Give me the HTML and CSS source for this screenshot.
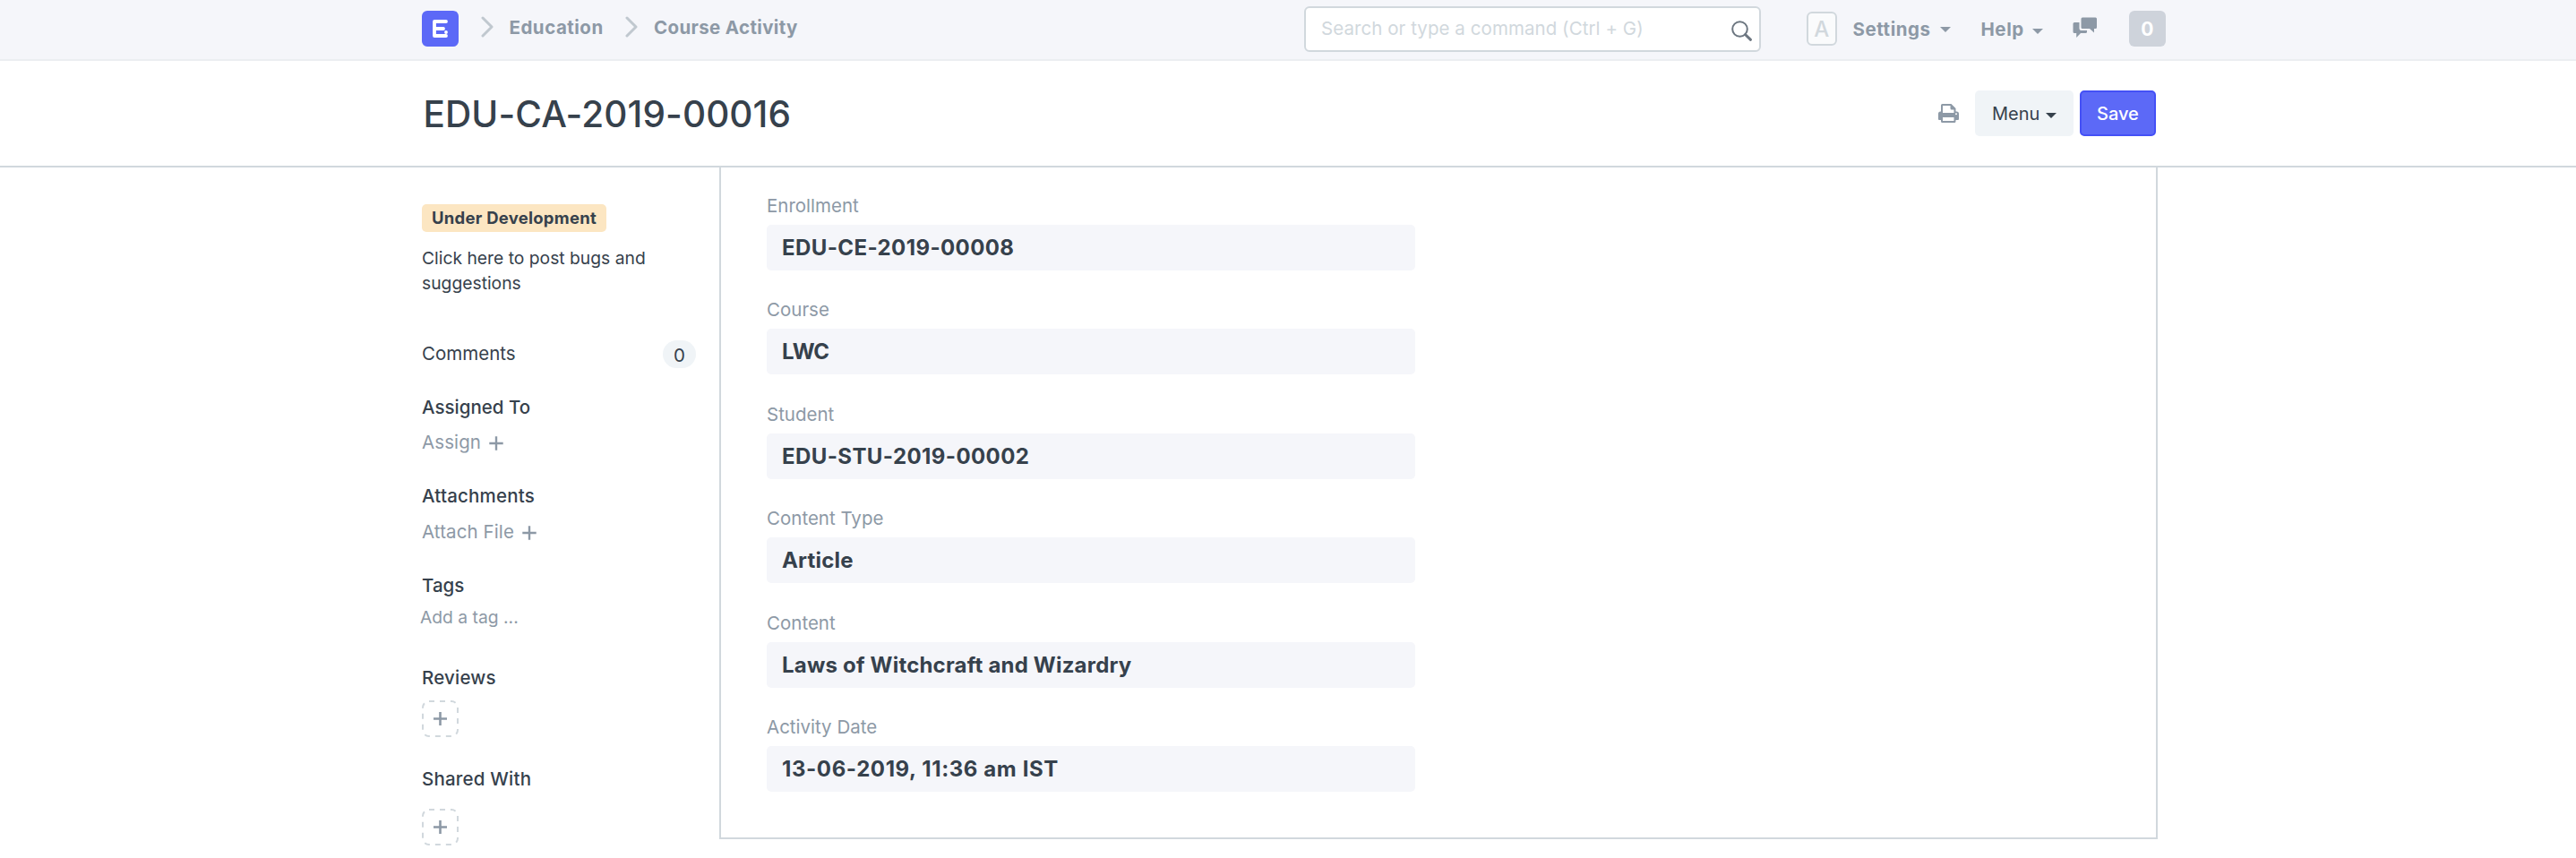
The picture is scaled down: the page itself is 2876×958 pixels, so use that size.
FILE: index.html
```html
<!DOCTYPE html>
<html lang="en">
<head>
<meta charset="utf-8">
<title>EDU-CA-2019-00016</title>
<link rel="stylesheet" href="styles.css">
</head>
<body>
<header class="navbar">
  <div class="nav-left">
    <a class="logo"><svg width="41" height="40" viewBox="0 0 41 40"><rect width="41" height="40" rx="6" fill="#5c69f7"/><path d="M27 24V24M27 12H14V28H27M14 20H24" fill="none" stroke="#fff" stroke-width="3.800" stroke-linecap="round" stroke-linejoin="round"/></svg></a>
    <svg class="chevron" width="14" height="24" viewBox="0 0 14 24"><path d="M2 2L12 12L2 22"/></svg>
    <a class="crumb crumb-module">Education</a>
    <svg class="chevron chevron-second" width="14" height="24" viewBox="0 0 14 24"><path d="M2 2L12 12L2 22"/></svg>
    <a class="crumb crumb-doctype">Course Activity</a>
  </div>
  <div class="search">
    <span class="search-text">Search or type a command (Ctrl + G)</span>
    <svg class="search-icon" width="24" height="24" viewBox="0 0 24 24"><circle cx="9.5" cy="9.5" r="8.3" fill="none" stroke="#6c7680" stroke-width="2"/><path d="M15.5 15.5L21.5 21.3" stroke="#6c7680" stroke-width="3" stroke-linecap="round"/></svg>
  </div>
  <div class="nav-right">
    <span class="avatar">A</span>
    <a class="nav-link settings">Settings</a><i class="caret caret-settings"></i>
    <a class="nav-link help">Help</a><i class="caret caret-help"></i>
    <svg class="chat" width="28" height="24" viewBox="0 0 28 24"><path d="M11 0.5H25.5Q27 .5 27 2V11.500Q27 13 25.500 13H24V17.500L19 13H11Q9.500 13 9.500 11.500V2Q9.500 .5 11 .5Z"/><path d="M2 6H7.500V13Q7.500 15 9.500 15H16V16.500Q16 18 14.500 18H9L4.200 23V18H2Q.5 18 .5 16.500V7.500Q.5 6 2 6Z"/></svg>
    <span class="count">0</span>
  </div>
</header>
<section class="page-head">
  <h1 class="title">EDU-CA-2019-00016</h1>
  <div class="actions">
    <svg class="printer" width="23" height="21" viewBox="0 0 23 21"><path fill-rule="evenodd" d="M3 8.500V1.500Q3 0 4.500 0H14.500L19.500 5V8.500H20.500Q23 8.500 23 11V17Q23 18 22 18H19.500V19.500Q19.500 21 18 21H4.500Q3 21 3 19.500V18H1Q0 18 0 17V11Q0 8.500 2.500 8.500ZM5 2V10H17.500V6.500H15Q13.500 6.500 13.500 5V2ZM5 15V19H17.500V15ZM20 10.300A1 1 0 1 0 20 12.300A1 1 0 1 0 20 10.300Z"/></svg>
    <button class="btn menu">Menu<i class="caret caret-menu"></i></button>
    <button class="btn save">Save</button>
  </div>
</section>
<main class="body">
  <aside class="sidebar">
    <span class="indicator">Under Development</span>
    <p class="note">Click here to post bugs and suggestions</p>
    <div class="comments"><span class="row">Comments</span><span class="pill">0</span></div>
    <h2 class="heading assigned">Assigned To</h2>
    <a class="action assign">Assign <svg class="plus" width="16" height="16" viewBox="0 0 16 16"><path d="M8 .3V15.700M.3 8H15.700"/></svg></a>
    <h2 class="heading attachments">Attachments</h2>
    <a class="action attach">Attach File <svg class="plus" width="16" height="16" viewBox="0 0 16 16"><path d="M8 .3V15.700M.3 8H15.700"/></svg></a>
    <h2 class="heading tags">Tags</h2>
    <span class="tag-input">Add a tag ...</span>
    <h2 class="heading reviews">Reviews</h2>
    <a class="add add-review"><svg width="41" height="41" viewBox="0 0 41 41"><rect x="1" y="1" width="39" height="39" rx="7"/><path d="M20.500 13V28M13 20.500H28"/></svg></a>
    <h2 class="heading shared">Shared With</h2>
    <a class="add add-share"><svg width="41" height="41" viewBox="0 0 41 41"><rect x="1" y="1" width="39" height="39" rx="7"/><path d="M20.500 13V28M13 20.500H28"/></svg></a>
  </aside>
  <section class="form">
    <div class="field"><label class="label">Enrollment</label><div class="value value-id">EDU-CE-2019-00008</div></div>
    <div class="field"><label class="label">Course</label><div class="value value-code">LWC</div></div>
    <div class="field"><label class="label">Student</label><div class="value value-id">EDU-STU-2019-00002</div></div>
    <div class="field"><label class="label">Content Type</label><div class="value">Article</div></div>
    <div class="field"><label class="label">Content</label><div class="value">Laws of Witchcraft and Wizardry</div></div>
    <div class="field"><label class="label">Activity Date</label><div class="value value-date">13-06-2019, 11:36 am IST</div></div>
  </section>
</main>
</body>
</html>
```
FILE: styles.css
```css
* { box-sizing: border-box; }
body { margin: 0; height: 958px; overflow: hidden; background: #fff; color: #36414c; font-family: Inter, "Liberation Sans", sans-serif; font-size: 20.5px; line-height: 32px; -webkit-font-smoothing: antialiased; }
svg { display: block; flex: none; }
h1, h2, p { margin: 0; }

.navbar { display: flex; height: 68px; padding-left: 471px; background: #f5f6fa; border-bottom: 2px solid #ebeef1; color: #8d99a6; font-weight: 700; letter-spacing: 0.35px; }
.nav-left { display: flex; width: 985px; }
.logo { margin-top: 12px; width: 41px; }
.chevron { margin: 18px 0 0 25px; fill: none; stroke: #c0c8cf; stroke-width: 3; stroke-linecap: round; stroke-linejoin: round; }
.crumb { margin-top: 15px; white-space: nowrap; }
.crumb-module { margin-left: 17.5px; width: 129.5px; letter-spacing: 0.5px; }
.chevron-second { margin-left: 0; }
.crumb-doctype { margin-left: 18px; }
.search { display: flex; justify-content: space-between; width: 510px; height: 51px; margin-top: 7px; border: 2px solid #d1d8dd; border-radius: 6px; background: #fff; color: #d1d8dd; font-weight: 400; letter-spacing: 0.06px; }
.search-text { margin: 7px 0 0 17px; white-space: nowrap; }
.search-icon { margin: 14px 7px 0 0; }
.nav-right { display: flex; margin-left: 51px; }
.avatar { width: 34px; height: 38px; margin-top: 13px; border: 2px solid #d1d8dd; border-radius: 6px; background: #fafbfc; color: #d1d8dd; font-weight: 500; font-size: 24px; line-height: 35px; text-align: center; }
.nav-link { margin-top: 17px; letter-spacing: 0.55px; }
.settings { margin-left: 17.5px; width: 97.5px; }
.help { margin-left: 33.5px; width: 57.5px; }
.caret { flex: none; width: 12px; height: 6px; background: currentColor; clip-path: polygon(0 0, 100% 0, 50% 100%); }
.caret-settings { margin-top: 30px; }
.caret-help { margin-top: 32px; }
.chat { margin: 19px 0 0 33px; fill: #8d99a6; }
.count { width: 41px; height: 40px; margin: 12px 0 0 35px; border-radius: 6px; background: #ced3db; color: #fff; font-size: 21px; line-height: 41px; text-align: center; }

.page-head { display: flex; justify-content: space-between; height: 119px; padding: 0 469px 0 472.5px; border-bottom: 2px solid #d1d8dd; }
.title { margin-top: 34px; font-size: 40.5px; font-weight: 500; line-height: 51px; letter-spacing: 0.1px; }
.actions { display: flex; margin-top: 33px; }
.printer { margin: 15px 18px 0 0; fill: #8d99a6; }
.btn { display: flex; height: 51px; padding: 0; border: 0; border-radius: 5px; font: inherit; font-size: 20px; letter-spacing: 0; }
.menu { width: 110px; margin-right: 7px; padding: 10px 19px 0 19px; justify-content: space-between; background: #f0f4f7; color: #36414c; }
.caret-menu { margin-top: 15px; }
.save { width: 85px; padding: 8px 0 0 17px; border: 2px solid #4450f6; background: #5c69f7; color: #fff; font-weight: 500; }

.body { display: flex; padding-left: 471px; height: 771px; }
.sidebar { display: flex; flex-direction: column; align-items: flex-start; width: 332px; }
.indicator { width: 206px; height: 31px; margin-top: 41px; padding-left: 11px; border-radius: 5px; background: #fce6c2; font-size: 18.5px; font-weight: 700; line-height: 31px; letter-spacing: 0.25px; white-space: nowrap; }
.note { width: 290px; margin-top: 15px; font-size: 19.3px; line-height: 28px; }
.comments { display: flex; justify-content: space-between; width: 306px; height: 32px; margin-top: 49px; }
.pill { width: 37px; height: 31px; margin-top: 1px; border-radius: 16px; background: #f0f4f7; line-height: 33px; text-align: center; }
.heading { height: 30px; font-size: 20.5px; font-weight: 500; letter-spacing: 0.2px; }
.action { display: flex; height: 30px; color: #8d99a6; letter-spacing: 0.1px; }
.plus { margin: 9px 0 0 9px; stroke: #8d99a6; stroke-width: 2.400; }
.assigned { margin-top: 28px; letter-spacing: 0; }
.assign { margin-top: 9px; }
.attachments { margin-top: 30px; }
.attach { margin-top: 10px; }
.tags { margin-top: 30px; letter-spacing: 0; }
.tag-input { height: 28px; margin: 7px 0 0 -2px; color: #8d99a6; font-size: 19.3px; line-height: 28px; }
.reviews { margin-top: 38px; }
.add rect { fill: none; stroke: #d1d8dd; stroke-width: 2; stroke-dasharray: 6 6; }
.add path { stroke: #8d99a6; stroke-width: 2.600; }
.add-review { margin-top: 11px; }
.shared { margin-top: 31px; }
.add-share { margin-top: 19px; }

.form { width: 1606px; height: 750px; padding: 28.9px 0 0 51px; border: 2px solid #d1d8dd; border-top: 0; }
.field { height: 116.500px; }
.label { display: block; height: 35px; color: #8d99a6; line-height: 28px; }
.value { width: 724px; height: 51px; padding-left: 17px; border-radius: 5px; background: #f5f6fa; font-size: 24px; font-weight: 700; line-height: 51px; letter-spacing: 0.2px; }
.value-id { letter-spacing: 0.4px; }
.value-code { letter-spacing: -0.9px; }
.value-date { letter-spacing: 0.6px; }
```
